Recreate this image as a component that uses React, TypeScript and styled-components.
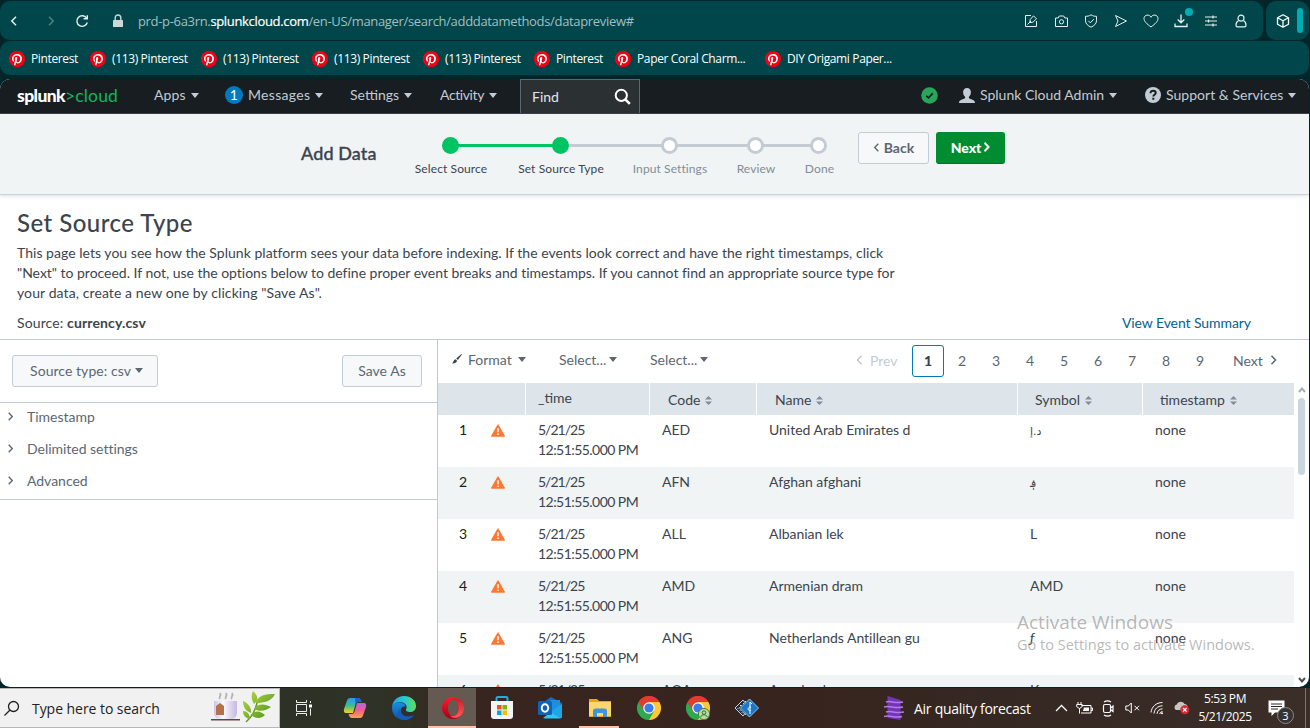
import React from "react";
import styled, { createGlobalStyle, css } from "styled-components";
import { FaPinterest } from "react-icons/fa";

const Global = createGlobalStyle`
  *, *::before, *::after { box-sizing: border-box; }
  html, body { margin: 0; padding: 0; overflow: hidden; }
  body { width: 1310px; height: 728px; font-family: Lato, "DejaVu Sans", sans-serif; font-size: 14px; color: #3c444d; }
`;

const Screen = styled.div`
  width: 1310px;
  height: 728px;
  display: flex;
  flex-direction: column;
  background: #00262a;
  overflow: hidden;
`;

/* ---------- browser chrome ---------- */
const AddressRow = styled.div`
  display: flex;
  gap: 3px;
  padding: 1px 1px 0 0;
  height: 40px;
`;
const AddressBar = styled.div`
  flex: 1;
  display: flex;
  align-items: center;
  height: 39px;
  background: #00464a;
  border-radius: 10px;
  padding: 0 7px 0 0;
  color: #e5f0f0;
`;
const SideBlock = styled.div`
  width: 43px;
  height: 39px;
  display: flex;
  align-items: center;
  gap: 7px;
  padding-left: 10px;
  background: #00464a;
  border-radius: 10px;
  color: #fff;
`;
const SideMark = styled.div`
  width: 6px;
  height: 25px;
  border-radius: 3px;
  background: #00adb5;
`;
const ChromeCell = styled.div<{ $w: number; $dim?: boolean; $ml?: number }>`
  position: relative;
  width: ${p => p.$w}px;
  margin-left: ${p => p.$ml ?? 0}px;
  display: flex;
  justify-content: center;
  align-items: center;
  opacity: ${p => (p.$dim ? 0.35 : 1)};
`;
const Dot = styled.i`
  position: absolute;
  top: -5px;
  right: 3px;
  width: 8px;
  height: 8px;
  border-radius: 50%;
  background: #00adb5;
`;
const Url = styled.div`
  flex: 1;
  padding-left: 9px;
  font: 13px/20px "Open Sans", sans-serif;
  letter-spacing: -0.33px;
  color: #a3bfc1;
  white-space: nowrap;
  b { font-weight: 400; color: #fff; -webkit-text-stroke: 0.2px #fff; }
`;
const Bookmarks = styled.div`
  height: 34px;
  margin: 1px 1px 4px 0;
  padding: 2px 0 0 9px;
  display: flex;
  align-items: center;
  background: #00464a;
  border-radius: 10px;
`;
const Bookmark = styled.div<{ $w: number }>`
  width: ${p => p.$w}px;
  display: flex;
  align-items: center;
  gap: 6px;
  font: 12px/18px "Open Sans", sans-serif;
  letter-spacing: -0.36px;
  color: #fff;
  white-space: nowrap;
`;
const PinBadge = styled.span`
  width: 16px;
  height: 16px;
  border-radius: 50%;
  background: radial-gradient(circle, #fff 60%, #f00014 62%);
  display: flex;
  svg { width: 16px; height: 16px; color: #f00014; }
`;

/* ---------- page ---------- */
const Page = styled.div`
  width: 1309px;
  height: 608px;
  border-radius: 10px;
  overflow: hidden;
  background: #fff;
  display: flex;
  flex-direction: column;
`;
const Nav = styled.div`
  height: 35px;
  flex: none;
  display: flex;
  align-items: center;
  background: #171d21;
  border-bottom: 1px solid #3c444d;
  color: #c3cbd4;
  line-height: 20px;
  padding-left: 17px;
`;
const Logo = styled.div`
  width: 137px;
  font: 900 17.5px/20px Lato, sans-serif;
  letter-spacing: -0.6px;
  color: #fff;
  white-space: nowrap;
  span { color: #12b55b; font-weight: 400; letter-spacing: 0.15px; }
`;
const NavItem = styled.div<{ $w: number; $ls?: number }>`
  width: ${p => p.$w}px;
  display: flex;
  align-items: center;
  gap: 5px;
  padding-bottom: 2px;
  letter-spacing: ${p => p.$ls ?? 0}px;
  white-space: nowrap;
`;
const Count = styled.span`
  width: 18px;
  height: 18px;
  border-radius: 50%;
  background: #007abd;
  color: #fff;
  text-align: center;
  line-height: 18px;
`;
const Caret = styled.i<{ $c?: string }>`
  border: 4px solid transparent;
  border-top: 5px solid ${p => p.$c || "currentColor"};
  border-bottom: 0;
`;
const Find = styled.div`
  width: 120px;
  height: 34px;
  align-self: flex-end;
  display: flex;
  align-items: center;
  justify-content: space-between;
  padding: 0 8px 0 11px;
  background: #2b3033;
  border: 1px solid #5c6773;
  border-bottom: 0;
  color: #e1e6eb;
  margin-right: 281px;
`;
const Header = styled.div`
  height: 81px;
  flex: none;
  display: flex;
  background: #f0f4f5;
  border-bottom: 1px solid #c8d3df;
  box-shadow: 0 1px 4px rgba(0, 0, 0, 0.14);
`;
const HeaderTitle = styled.div`
  width: 395px;
  padding: 27px 0 0 301px;
  font-size: 18px;
  line-height: 24px;
  font-weight: 500;
  letter-spacing: 0.1px;
  white-space: nowrap;
  -webkit-text-stroke: 0.35px #3c444d;
`;
const Step = styled.div<{ $w: number; $done?: boolean; $l?: string; $r?: string }>`
  position: relative;
  width: ${p => p.$w}px;
  padding-top: 23px;
  display: flex;
  flex-direction: column;
  align-items: center;
  font-size: 12px;
  line-height: 16px;
  letter-spacing: 0.1px;
  white-space: nowrap;
  color: ${p => (p.$done ? "#3c444d" : "#818d99")};
  &::before, &::after {
    content: "";
    position: absolute;
    top: 30px;
    height: 3px;
    width: 50%;
  }
  &::before { left: 0; background: ${p => p.$l || "transparent"}; }
  &::after { left: 50%; background: ${p => p.$r || "transparent"}; }
`;
const StepLabel = styled.span`padding-left: 2px;`;
const Bullet = styled.span<{ $done?: boolean }>`
  position: relative;
  z-index: 1;
  width: 17px;
  height: 17px;
  margin-bottom: 7px;
  border-radius: 50%;
  border: 3px solid ${p => (p.$done ? "#00c364" : "#c3cbd4")};
  background: ${p => (p.$done ? "#00c364" : "#fff")};
`;
const Button = styled.div<{ $w: number; $primary?: boolean; $strong?: boolean; $pl?: number }>`
  width: ${p => p.$w}px;
  height: 32px;
  flex: none;
  display: flex;
  align-items: center;
  justify-content: center;
  gap: 4px;
  padding: 0 0 2px ${p => p.$pl ?? 0}px;
  border-radius: 3px;
  background: #f7f8fa;
  border: 1px solid #c3cbd4;
  color: #5c6773;
  letter-spacing: 0.05px;
  white-space: nowrap;
  ${p => p.$strong && css`font-weight: 700; letter-spacing: 0;`}
  ${p => p.$primary && css`background: #008c30; border-color: #008c30 #008c30 #00742a; color: #fff; font-weight: 900; gap: 2px; letter-spacing: -0.1px;`}
`;
const HeaderButtons = styled.div`
  display: flex;
  gap: 7px;
  padding: 18px 0 0 8px;
`;
const Intro = styled.div`
  height: 145px;
  flex: none;
  padding: 14px 17px 0;
  border-bottom: 1px solid #bccbd6;
  line-height: 20px;
`;
const Title = styled.h1`
  margin: 0 0 7px;
  font-size: 24px;
  line-height: 27px;
  font-weight: 500;
  letter-spacing: 0.47px;
`;
const Line = styled.div<{ $ls?: number }>`
  letter-spacing: ${p => p.$ls ?? 0.1}px;
  white-space: nowrap;
`;
const SourceRow = styled.div`
  display: flex;
  justify-content: space-between;
  margin-top: 10px;
  padding-right: 41px;
  letter-spacing: 0.12px;
`;
const Link = styled.a`color: #006297; letter-spacing: -0.08px;`;

const Body = styled.div`
  flex: 1;
  display: flex;
  min-height: 0;
`;
const Side = styled.div`
  width: 438px;
  flex: none;
  border-right: 1px solid #bccbd6;
  color: #5c6773;
`;
const SideTop = styled.div`
  height: 63px;
  display: flex;
  justify-content: space-between;
  padding: 15px 15px 0 12px;
  border-bottom: 1px solid #bccbd6;
`;
const SideList = styled.div`
  height: 97px;
  border-bottom: 1px solid #bccbd6;
`;
const SideItem = styled.div`
  height: 32px;
  display: flex;
  align-items: center;
  gap: 13px;
  padding: 0 0 5px 7px;
  letter-spacing: -0.02px;
`;
const Results = styled.div`
  flex: 1;
  display: flex;
  flex-direction: column;
`;
const Tools = styled.div`
  height: 43px;
  flex: none;
  display: flex;
  align-items: center;
  padding: 0 0 2px 14px;
  color: #5c6773;
`;
const Tool = styled.div<{ $w: number; $gap?: number }>`
  width: ${p => p.$w}px;
  display: flex;
  align-items: center;
  gap: ${p => p.$gap ?? 3}px;
  padding-bottom: 3px;
  letter-spacing: 0;
`;
const PageNav = styled.div<{ $w: number; $off?: boolean; $ml?: number }>`
  width: ${p => p.$w}px;
  margin-left: ${p => p.$ml ?? 0}px;
  padding-bottom: 1px;
  display: flex;
  align-items: center;
  gap: 7px;
  color: ${p => (p.$off ? "#c3cbd4" : "#5c6773")};
`;
const PageNo = styled.div<{ $on?: boolean }>`
  width: 32px;
  height: 32px;
  margin-right: 2px;
  border-radius: 3px;
  line-height: 29px;
  text-align: center;
  border: 1px solid ${p => (p.$on ? "#007abd" : "transparent")};
  color: ${p => (p.$on ? "#3c444d" : "#5c6773")};
  font-weight: ${p => (p.$on ? 900 : 400)};
`;
const Grid = styled.div`
  flex: 1;
  display: flex;
  min-height: 0;
`;
const Table = styled.div`
  width: 856px;
  overflow: hidden;
`;
const Row = styled.div<{ $alt?: boolean }>`
  display: grid;
  grid-template-columns: 88px 124px 107px 261px 125px 151px;
  height: 52px;
  line-height: 20px;
  background: ${p => (p.$alt ? "#f0f4f5" : "#fff")};
`;
const HeadRow = styled(Row)`
  height: 32px;
  background: #dde4ea;
`;
const HeadCell = styled.div<{ $pad: number; $up?: boolean; $last?: boolean }>`
  border-right: ${p => (p.$last ? 0 : 1)}px solid #fff;
  display: flex;
  align-items: center;
  gap: 5px;
  padding: ${p => (p.$up ? "0 0 2px" : "2px 0 0")} ${p => p.$pad}px;
  white-space: nowrap;
  letter-spacing: 0;
`;
const Cell = styled.div`
  padding: 5px 0 0 12px;
  white-space: nowrap;
  letter-spacing: -0.02px;
`;
const TimeCell = styled(Cell)`
  letter-spacing: -0.55px;
`;
const Day = styled.div`letter-spacing: -1px;`;
const NumCell = styled(Cell)`
  display: flex;
  align-items: flex-start;
  gap: 24px;
  padding-left: 21px;
  color: #171d21;
  svg { margin-top: 4px; }
`;
const Arabic = styled.bdi`font: 11px/20px "DejaVu Sans", sans-serif;`;
const Scroll = styled.div`
  width: 15px;
  display: flex;
  flex-direction: column;
  align-items: center;
  justify-content: space-between;
  padding: 4px 0 4px;
`;
const ScrollTop = styled.div`
  display: flex;
  flex-direction: column;
  align-items: center;
  gap: 5px;
`;
const Thumb = styled.div`
  width: 7px;
  height: 77px;
  border-radius: 4px;
  background: #c9d6df;
`;
const Watermark = styled.div`
  position: absolute;
  left: 1017px;
  top: 609px;
  font: 14.5px/20px "Open Sans", sans-serif;
  letter-spacing: 0;
  color: rgba(140, 140, 140, 0.62);
  white-space: nowrap;
  pointer-events: none;
`;
const WatermarkTitle = styled.div`
  font-size: 19px;
  line-height: 26px;
`;

/* ---------- taskbar ---------- */
const Taskbar = styled.div`
  height: 40px;
  margin-top: 1px;
  display: flex;
  background: linear-gradient(90deg, #2c3227 0, #2f3226 380px, #38251f 480px, #38241f 800px, #352822 1000px, #3b2d27 1310px);
  color: #fff;
  font-family: "Open Sans", sans-serif;
`;
const SearchBox = styled.div`
  width: 280px;
  display: flex;
  align-items: center;
  background: #f1f1f1;
  border: solid #b7b7b7;
  border-width: 1px 1px 1px 0;
  color: #222;
  padding: 0 4px 0 3px;
  gap: 12px;
  letter-spacing: -0.05px;
  span { flex: 1; }
`;
const Task = styled.div<{ $active?: boolean; $open?: boolean; $first?: boolean }>`
  width: ${p => (p.$first ? 48 : 49)}px;
  margin-right: ${p => (p.$first ? 2 : 0)}px;
  display: flex;
  justify-content: center;
  align-items: center;
  background: ${p => (p.$active ? "linear-gradient(#645a52, #645a52) 0 0 / 48px 100% no-repeat" : "none")};
  position: relative;
  &::after {
    content: "";
    position: absolute;
    bottom: 0;
    left: ${p => (p.$active ? 0 : 4)}px;
    right: ${p => (p.$active ? 1 : 5)}px;
    height: 2px;
    background: ${p => (p.$active || p.$open ? "#ffc0a6" : "transparent")};
  }
`;
const Weather = styled.div`
  margin-left: 113px;
  width: 165px;
  display: flex;
  align-items: center;
  gap: 10px;
  white-space: nowrap;
  letter-spacing: -0.28px;
`;
const Tray = styled.div<{ $w: number }>`
  width: ${p => p.$w}px;
  display: flex;
  align-items: center;
  justify-content: center;
  position: relative;
`;
const Clock = styled.div`
  width: 62px;
  margin-left: 3px;
  text-align: center;
  padding-top: 2px;
  font-size: 12px;
  line-height: 18px;
  letter-spacing: -0.4px;
`;
const NoteCount = styled.span`
  position: absolute;
  left: 21px;
  top: 19px;
  width: 17px;
  height: 17px;
  border-radius: 50%;
  border: 1px solid #8d8984;
  background: #343434;
  font-size: 11px;
  line-height: 15px;
  text-align: center;
`;
const ShowDesktop = styled.div`
  margin-left: auto;
  width: 5px;
  border-left: 1px solid #7b726d;
`;

type IconProps = { w?: number; h?: number; box?: string; sw?: number; children: React.ReactNode };
const Svg = styled.svg`flex-shrink: 0;`;
const Icon = ({ w = 16, h, box, sw = 1, children }: IconProps) => (
  <Svg width={w} height={h ?? w} viewBox={box ?? `0 0 ${w} ${h ?? w}`} fill="none" stroke="currentColor" strokeWidth={sw}>
    {children}
  </Svg>
);
const Chevron = ({ left, size = 10, sw = 1.5 }: { left?: boolean; size?: number; sw?: number }) => (
  <Icon w={7} h={size} box="0 0 7 10" sw={sw}><path d={left ? "M5.5 .8L1.500 5l4 4.200" : "M1.500 .8L5.500 5l-4 4.200"} /></Icon>
);
const Sort = () => (
  <Icon w={7} h={9}><path d="M3.500 0L7 3.500H0zM0 5.500h7L3.500 9z" fill="#818d99" stroke="none" /></Icon>
);
const Warn = () => (
  <Icon w={14} h={13}>
    <path d="M7 1L13.300 12H.700z" fill="#ff7733" stroke="#ff7733" strokeWidth="1.300" strokeLinejoin="round" />
    <path d="M7 4.200v4M7 9.400v1.600" stroke="#fff" strokeWidth="1.500" />
  </Icon>
);

const bookmarks: [string, number][] = [
  ["Pinterest", 81], ["(113) Pinterest", 111], ["(113) Pinterest", 111], ["(113) Pinterest", 111],
  ["(113) Pinterest", 111], ["Pinterest", 81], ["Paper Coral Charm...", 150], ["DIY Origami Paper...", 150],
];

const rows: [string, string, React.ReactNode][] = [
  ["AED", "United Arab Emirates d", <Arabic dir="rtl">د.إ</Arabic>],
  ["AFN", "Afghan afghani", <Arabic dir="rtl">؋</Arabic>],
  ["ALL", "Albanian lek", "L"],
  ["AMD", "Armenian dram", "AMD"],
  ["ANG", "Netherlands Antillean gu", <i>ƒ</i>],
  ["AOA", "Angolan kwanza", "Kz"],
];

const ChromeLogo = ({ user }: { user?: boolean }) => (
  <Icon w={24}>
    <g stroke="none">
      <path d="M12 12L1.600 6A12 12 0 0 1 22.400 6z" fill="#e33b2e" />
      <path d="M12 12L22.400 6A12 12 0 0 1 12 24z" fill="#fcc934" />
      <path d="M12 12v12A12 12 0 0 1 1.600 6z" fill="#2da94f" />
      <path d="M12 6h10.400L17.200 15 12 24z" fill="#fcc934" />
      <path d="M1.600 6L6.800 15 12 24l5.200-9H9z" fill="#2da94f" />
      <path d="M1.600 6A12 12 0 0 1 22.400 6H12l-5.200 9z" fill="#e33b2e" />
      <circle cx="12" cy="12" r="5.800" fill="#fff" />
      <circle cx="12" cy="12" r="4.600" fill="#3b7ded" />
    </g>
    {user && (
      <g>
        <circle cx="18" cy="18" r="5.600" fill="#b5dda0" stroke="#4e7b42" />
        <circle cx="18" cy="16.600" r="1.800" stroke="#3e6d35" />
        <path d="M14.800 21c.6-3 5.800-3 6.400 0" stroke="#3e6d35" />
      </g>
    )}
  </Icon>
);

const Chrome = () => (
  <>
    <AddressRow>
      <AddressBar>
        <ChromeCell $w={28}><Icon w={8} h={10} sw={1.500}><path d="M6 .7L1.800 5 6 9.300" /></Icon></ChromeCell>
        <ChromeCell $w={46} $dim><Icon w={8} h={10} sw={1.500}><path d="M2 .7L6.200 5 2 9.300" /></Icon></ChromeCell>
        <ChromeCell $w={16}>
          <Icon w={14} sw={1.400}><path d="M11.600 4.100A5.300 5.300 0 1 0 12.300 8.500" /><path d="M12.300 1.200v3.600H8.600" /></Icon>
        </ChromeCell>
        <ChromeCell $w={22} $ml={17}>
          <Icon w={12} h={14}><rect x="1" y="6" width="10" height="7" rx=".5" fill="#d0d6d6" stroke="none" /><path d="M3.200 6V3.800a2.800 2.800 0 0 1 5.600 0V6" stroke="#d0d6d6" strokeWidth="1.400" /></Icon>
        </ChromeCell>
        <Url>prd-p-6a3rn.<b>splunkcloud.com</b>/en-US/manager/search/adddatamethods/datapreview#</Url>
        <ChromeCell $w={30}><Icon w={14}><path d="M7 1.500H1.500v11h11V7" /><path d="M3.500 10.500L7 7M9.500 1.800l3 3-3.600 3.400-3.200.4.6-3.200z" /></Icon></ChromeCell>
        <ChromeCell $w={30}><Icon w={15} h={14}><path d="M1.500 4h2.600l1.200-2h4.400l1.200 2h2.600v8.500h-12z" strokeLinejoin="round" /><circle cx="7.500" cy="7.800" r="2.100" /></Icon></ChromeCell>
        <ChromeCell $w={30}><Icon w={14}><path d="M7 .8c2 1.300 3.600 1.500 5.500 1.500v4.500c0 3-2.500 5-5.500 6.400C4 11.800 1.500 9.800 1.500 6.800V2.300C3.400 2.300 5 2.100 7 .8z" /><path d="M4.300 6.800l2 2 3.500-3.600" /></Icon></ChromeCell>
        <ChromeCell $w={30}><Icon w={14}><path d="M1.500 1.500l11 5.500-11 5.500L4 7z" strokeLinejoin="round" /></Icon></ChromeCell>
        <ChromeCell $w={30}><Icon w={16} h={14}><path d="M8 13C4 10 1 7.500 1 4.500 1 .6 6.500-.2 8 3.300 9.500-.2 15 .6 15 4.500 15 7.500 12 10 8 13z" /></Icon></ChromeCell>
        <ChromeCell $w={30}><Icon w={14} h={15} sw={1.300}><path d="M7 1.500v8M3.700 6.500L7 9.800l3.300-3.300M1 10.500v3h12v-3" /></Icon><Dot /></ChromeCell>
        <ChromeCell $w={30}><Icon w={14} h={12} sw={1.200}><path d="M1 2h12M1 6h12M1 10h12M9 .5v3M4.500 4.500v3M9 8.500v3" /></Icon></ChromeCell>
        <ChromeCell $w={30}><Icon w={12} h={14} sw={1.200}><circle cx="6" cy="4.200" r="3" /><path d="M3.600 6.500C1.500 7.600 1 9.200 1 11.200c0 1 .6 1.600 1.500 1.600h7c.9 0 1.500-.6 1.500-1.600 0-2-.5-3.600-2.600-4.700" /></Icon></ChromeCell>
      </AddressBar>
      <SideBlock>
        <Icon w={14} h={14} sw={1.300}><path d="M7 .8l5.500 3v6.400L7 13.200l-5.500-3V3.800zM1.500 3.800L7 6.700l5.500-2.900M7 6.700v6.500" strokeLinejoin="round" /></Icon>
        <SideMark />
      </SideBlock>
    </AddressRow>
    <Bookmarks>
      {bookmarks.map(([label, w], i) => (
        <Bookmark key={i} $w={w}><PinBadge><FaPinterest /></PinBadge>{label}</Bookmark>
      ))}
    </Bookmarks>
  </>
);

const TopNav = () => (
  <Nav>
    <Logo>splunk<span>&gt;cloud</span></Logo>
    <NavItem $w={71} $ls={0.1}>Apps <Caret /></NavItem>
    <NavItem $w={125} $ls={0.3}><Count>1</Count>Messages <Caret /></NavItem>
    <NavItem $w={90}>Settings <Caret /></NavItem>
    <NavItem $w={80} $ls={-0.4}>Activity <Caret /></NavItem>
    <Find>Find<Icon w={17} h={17} sw={2}><circle cx="7.300" cy="7.300" r="5.600" stroke="#fff" /><path d="M11.300 11.300l4.500 4.500" stroke="#fff" strokeWidth="2.600" /></Icon></Find>
    <NavItem $w={38}><Icon w={17}><circle cx="8.500" cy="8.500" r="8.300" fill="#28a558" stroke="none" /><path d="M5.300 8.700l2.200 2.200 4.200-4.500" stroke="#171d21" strokeWidth="1.600" /></Icon></NavItem>
    <NavItem $w={186}>
      <Icon w={16} h={15}><path d="M8 0c2.500 0 3.900 1.800 3.900 4.200 0 2-.9 3.800-2 4.600v1.500c1.400 1 6.100 1.100 6.100 4.700H0c0-3.600 4.700-3.700 6.100-4.700V8.800c-1.100-.8-2-2.600-2-4.600C4.100 1.800 5.500 0 8 0z" fill="#c3cbd4" stroke="none" /></Icon>
      Splunk Cloud Admin <Caret />
    </NavItem>
    <NavItem $w={155} $ls={0.03}>
      <Icon w={16}><circle cx="8" cy="8" r="8" fill="#c3cbd4" stroke="none" /><path d="M5.500 6.300c0-3.600 5.200-3.200 5.200-.3 0 1.800-2.400 1.800-2.400 3.600M8.300 10.800v2" stroke="#171d21" strokeWidth="2" /></Icon>
      Support &amp; Services <Caret />
    </NavItem>
  </Nav>
);

const GREEN = "#00c364";
const GREY = "#c3cbd4";

const Wizard = () => (
  <Header>
    <HeaderTitle>Add Data</HeaderTitle>
    <Step $w={110} $done $r={GREEN}><Bullet $done /><StepLabel>Select Source</StepLabel></Step>
    <Step $w={110} $done $l={GREEN} $r={GREY}><Bullet $done /><StepLabel>Set Source Type</StepLabel></Step>
    <Step $w={108} $l={GREY} $r={GREY}><Bullet /><StepLabel>Input Settings</StepLabel></Step>
    <Step $w={64} $l={GREY} $r={GREY}><Bullet /><StepLabel>Review</StepLabel></Step>
    <Step $w={63} $l={GREY}><Bullet /><StepLabel>Done</StepLabel></Step>
    <HeaderButtons>
      <Button $w={71} $strong><Chevron left size={9} />Back</Button>
      <Button $w={69} $primary>Next<Chevron size={10} sw={2} /></Button>
    </HeaderButtons>
  </Header>
);

const Preview = () => (
  <Results>
    <Tools>
      <Tool $w={107} $gap={6}>
        <Icon w={10} h={10}><path d="M9.500 0L10 .5 5.800 6 4.200 4.500zM3.500 5.200l1.600 1.600C4.500 9 2 9.800 0 9.500c1.500-1 1.300-3.500 3.500-4.300z" fill="#3c444d" stroke="none" /></Icon>
        Format <Caret />
      </Tool>
      <Tool $w={91}>Select... <Caret /></Tool>
      <Tool $w={206}>Select... <Caret /></Tool>
      <PageNav $w={56} $off><Chevron left />Prev</PageNav>
      {[1, 2, 3, 4, 5, 6, 7, 8, 9].map(n => <PageNo key={n} $on={n === 1}>{n}</PageNo>)}
      <PageNav $w={46} $ml={15}>Next<Chevron /></PageNav>
    </Tools>
    <Grid>
      <Table>
        <HeadRow>
          <HeadCell $pad={0} />
          <HeadCell $pad={12} $up>_time</HeadCell>
          <HeadCell $pad={18}>Code<Sort /></HeadCell>
          <HeadCell $pad={18}>Name<Sort /></HeadCell>
          <HeadCell $pad={17}>Symbol<Sort /></HeadCell>
          <HeadCell $pad={17} $last>timestamp<Sort /></HeadCell>
        </HeadRow>
        {rows.map(([code, name, sym], i) => (
          <Row key={code} $alt={i % 2 === 1}>
            <NumCell>{i + 1}<Warn /></NumCell>
            <TimeCell><Day>5/21/25</Day>12:51:55.000 PM</TimeCell>
            <Cell>{code}</Cell>
            <Cell>{name}</Cell>
            <Cell>{sym}</Cell>
            <Cell>none</Cell>
          </Row>
        ))}
      </Table>
      <Scroll>
        <ScrollTop>
          <Icon w={8} h={6} sw={2}><path d="M1 5l3-3.500L7 5" stroke="#a9aeb3" /></Icon>
          <Thumb />
        </ScrollTop>
        <Icon w={8} h={6} sw={2}><path d="M1 1l3 3.500L7 1" stroke="#4d4d4d" /></Icon>
      </Scroll>
    </Grid>
  </Results>
);

const WindowsTaskbar = () => (
  <Taskbar>
    <SearchBox>
      <Icon w={17} h={17} sw={1.300}><circle cx="10.500" cy="6.500" r="5" stroke="#222" /><path d="M7 10L1.500 15.500" stroke="#222" /></Icon>
      <span>Type here to search</span>
      <Icon w={64} h={34}>
        <defs>
          <linearGradient id="cup"><stop stopColor="#cfc4e6" /><stop offset=".4" stopColor="#fbf8ff" /><stop offset="1" stopColor="#c6b8df" /></linearGradient>
          <linearGradient id="leaf" x2="1" y2="1"><stop stopColor="#b9dc45" /><stop offset="1" stopColor="#4b8e1c" /></linearGradient>
        </defs>
        <path d="M9 8c-2-2 2-3 0-6M15 8c-2-2 2-3 0-6M21 8c-2-2 2-3 0-6" stroke="#b5b2b5" strokeWidth="1.800" />
        <path d="M3 10h23v11c0 5-3 7-6 7H9c-4 0-6-3-6-7z" fill="url(#cup)" stroke="none" />
        <path d="M5 15l4-3 4 3v9H5z" fill="#b4714a" stroke="none" />
        <path d="M0 28h29v1.500H0z" fill="#6e4043" stroke="none" />
        <path d="M35 31c7-6 9-12 12-22" stroke="#5f9a20" strokeWidth="1.500" />
        <g fill="url(#leaf)" stroke="none">
          <path d="M42 0c6 5 5 10 1 13-3-5-3-9-1-13zM45 12c2-8 9-9 19-9-3 7-11 9-19 9zM43 18c4-6 11-5 17-2-5 4-12 5-17 2zM40 24c4-5 9-4 14 0-4 4-9 4-14 0zM32 10c5 2 9 7 8 12-6-2-8-7-8-12zM32 20c4 0 7 3 7 8-5-1-7-4-7-8z" />
        </g>
      </Icon>
    </SearchBox>
    <Task $first>
      <Icon w={18} h={16}><path d="M1.500 0v2.500h10V0M1.500 16v-2.500h10V16M1.500 4.500h10v7h-10zM15.500 1v2M15.500 8.500v7" stroke="#eee" /><path d="M14 4.500h3v3h-3z" fill="#fff" stroke="none" /></Icon>
    </Task>
    <Task>
      <Icon w={24} h={22}>
        <defs>
          <linearGradient id="cpA" x2="0" y2="1"><stop stopColor="#209df2" /><stop offset=".5" stopColor="#3bbd8c" /><stop offset="1" stopColor="#f6d21c" /></linearGradient>
          <linearGradient id="cpB" x2="0" y2="1"><stop stopColor="#b760e8" /><stop offset=".5" stopColor="#f0608a" /><stop offset="1" stopColor="#ffa458" /></linearGradient>
        </defs>
        <path d="M7 1h8c2 0 3 2 3.500 4H15c-1.500 0-2 1-2.500 2.500L10 16H3c-2 0-2.500-2-2-4L4 3.500C4.500 2 5.500 1 7 1z" fill="url(#cpA)" stroke="none" />
        <path d="M17 21H9c-2 0-3-2-3.500-4H9c1.500 0 2-1 2.500-2.500L14 6h7c2 0 2.500 2 2 4l-3 8.500C19.500 20 18.500 21 17 21z" fill="url(#cpB)" stroke="none" />
        <path d="M12 1h3c2 0 3 2 3.500 4H15c-1.500 0-2 1-2.500 2.500z" fill="#1763d6" stroke="none" />
      </Icon>
    </Task>
    <Task>
      <Icon w={24}>
        <defs>
          <linearGradient id="edA"><stop stopColor="#1ca3e8" /><stop offset=".5" stopColor="#28c7d4" /><stop offset="1" stopColor="#62de55" /></linearGradient>
          <linearGradient id="edB" x2="0" y2="1"><stop stopColor="#1b8fe0" /><stop offset="1" stopColor="#0c4fa5" /></linearGradient>
        </defs>
        <g stroke="none">
          <path d="M0 12C0 5 5 0 12 0c7 0 12 4.500 12 10 0 4-3 6-6 6-3 0-4.500-1-4-2.500C16 10 13 6 8 6 4 6 0 9 0 12z" fill="url(#edA)" />
          <path d="M0 12c0-3 3-5.500 7-5.500 4 0 6.500 2 6.500 4C9 10 8 14 9.500 17c2 4 8 5 12.500 2-2 3-6 5-10 5C5 24 0 19 0 12z" fill="url(#edB)" />
          <path d="M8.500 12.500c-2 7 6 10 13.500 6.500-2 3-6 5-10 5-6 0-9-6-3.500-11.500z" fill="#165cb4" />
        </g>
      </Icon>
    </Task>
    <Task $active>
      <Icon w={24}>
        <defs>
          <linearGradient id="opA" x2="0" y2="1"><stop stopColor="#ff1b2d" /><stop offset="1" stopColor="#a70014" /></linearGradient>
          <linearGradient id="opB" x2="0" y2="1"><stop stopColor="#c4202b" /><stop offset="1" stopColor="#ff5a5a" /></linearGradient>
        </defs>
        <path fillRule="evenodd" d="M12 1a11 11 0 1 0 0 22 11 11 0 1 0 0-22zM12 4c3 0 5 3.500 5 8s-2 8-5 8-5-3.500-5-8 2-8 5-8z" fill="url(#opA)" stroke="none" />
        <path d="M9 4.500C12 0 23 2 23 12S12 24 9 19.500c5 2.500 8.500-2 8.500-7.500S14 2 9 4.500z" fill="url(#opB)" stroke="none" />
      </Icon>
    </Task>
    <Task>
      <Icon w={24}>
        <path d="M6.500 6V2.500C6.500 1.500 7 1 8 1h8c1 0 1.500.5 1.500 1.500V6" stroke="#29a9e0" strokeWidth="2" />
        <path d="M1 5h22v15a3 3 0 0 1-3 3H4a3 3 0 0 1-3-3z" fill="#f4f4f4" stroke="none" />
        <path d="M7 9h4.500v4.500H7z" fill="#f25022" stroke="none" /><path d="M12.500 9H17v4.500h-4.500z" fill="#7fba00" stroke="none" />
        <path d="M7 14.500h4.500V19H7z" fill="#00a4ef" stroke="none" /><path d="M12.500 14.500H17V19h-4.500z" fill="#ffb900" stroke="none" />
      </Icon>
    </Task>
    <Task>
      <Icon w={25} h={24}>
        <g stroke="none">
          <path d="M4 7l9-6 11 6v12H4z" fill="#1469ba" /><path d="M12 4h10v12H12z" fill="#1d8fe0" />
          <path d="M5 22l19-14v12a2.500 2.500 0 0 1-2.500 2.500H7z" fill="#36c4f3" /><path d="M24 8v12a2 2 0 0 1-2 2L12 16z" fill="#1ea5e6" />
          <rect x="0" y="5" width="14" height="14" rx="1.500" fill="#0f64b8" />
        </g>
        <ellipse cx="7" cy="12" rx="3.200" ry="3.700" stroke="#fff" strokeWidth="2" />
      </Icon>
    </Task>
    <Task $open>
      <Icon w={22} h={20}>
        <g stroke="none">
          <path d="M0 1h8l2 2h12v16H0z" fill="#e8a50c" /><path d="M0 4h22v14H0z" fill="#ffd768" />
          <path d="M4 19v-6a2.500 2.500 0 0 1 2.500-2.500h9A2.500 2.500 0 0 1 18 13v6h-4v-4H8v4z" fill="#3a96dd" />
        </g>
      </Icon>
    </Task>
    <Task><ChromeLogo /></Task>
    <Task><ChromeLogo user /></Task>
    <Task>
      <Icon w={24} h={20}>
        <path d="M8 2L0 10l8 8 6-8z" fill="#1b2a38" stroke="#c9d6e0" />
        <path d="M2.500 10l6 6M5 7l6 6M11 3L4 10l7 7" stroke="#dce6ec" strokeDasharray="1.500 1.500" />
        <path d="M14.500 1L23.500 10l-9 9-9-9z" fill="#1b78c8" stroke="#8cc4ec" />
        <path d="M15 4v12M15 4l2 2M16 9c-4 0-3.500 4-.5 3.500" stroke="#fff" />
      </Icon>
    </Task>
    <Weather>
      <Icon w={20} h={24}>
        <path d="M3.500 0l13 4v20L3.500 22z" fill="#7136b8" stroke="none" />
        <path d="M2 6c5-2 8 2 17 0M0 11c6-2 10 2 19 0M2 16c5-2 9 2 18 0M0 20.500c6-2 10 2 18 0" stroke="#b57be8" strokeWidth="1.600" />
      </Icon>
      Air quality forecast
    </Weather>
    <Tray $w={24}><Icon w={13} h={8} sw={1.300}><path d="M1 7l5.500-5.500L12 7" /></Icon></Tray>
    <Tray $w={22}><Icon w={17} h={13}><path d="M5.500 3.500h9.500v7.500H5M15 6h1.500v2.500H15M2 0v2.500M5 0v2.500M.7 2.500h5.500v2.200L3.500 6.500.7 4.700zM3.500 6.500v5" /><path d="M8 5.500h5V9H7z" fill="#fff" stroke="none" /></Icon></Tray>
    <Tray $w={26}><Icon w={12} h={17} sw={1.200}><rect x="1.500" y="4.500" width="7" height="8" rx="1.500" /><path d="M8.500 8l2.500-2v5.500l-2.500-2M2 2c2-1.300 5-1.300 7 0M2 15c2 1.300 5 1.300 7 0" /></Icon></Tray>
    <Tray $w={22}><Icon w={15} h={12}><path d="M.8 4h2.500l3-3v10l-3-3H.8zM9.500 3.800l4.500 4.500M14 3.800L9.500 8.300" /></Icon></Tray>
    <Tray $w={28}><Icon w={14} h={14}><path d="M1 11.500C1.500 6 6 1.500 12.500 1.500M4 12.500C4.500 8 7.500 5 12.500 4.800M7 12.800c.3-3 2.500-4.800 5.500-5M9.800 13c.2-1.500 1.200-2.300 2.700-2.500" /><circle cx="12" cy="12.300" r="1" fill="#fff" stroke="none" /></Icon></Tray>
    <Tray $w={20}><Icon w={17} h={14}><path d="M3 9a3 3 0 0 1 .8-5.500C5-.2 10-.2 11.500 3c3 0 4 3 2.500 6z" fill="#c9c5c2" stroke="none" /><circle cx="11.800" cy="8.800" r="4.500" fill="#d92832" stroke="none" /><path d="M10 7l3.600 3.600M13.600 7L10 10.600" stroke="#fff" strokeWidth="1.300" /></Icon></Tray>
    <Clock>5:53 PM<br />5/21/2025</Clock>
    <Tray $w={40}>
      <Icon w={17} h={17}><path d="M.5.5h16v12H7l-3.500 3.500v-3.500h-3z" fill="#fff" stroke="none" /><path d="M3 4h11M3 6.500h11M3 9h7" stroke="#352822" /></Icon>
      <NoteCount>3</NoteCount>
    </Tray>
    <ShowDesktop />
  </Taskbar>
);

export default function App() {
  return (
    <Screen>
      <Global />
      <Chrome />
      <Page>
        <TopNav />
        <Wizard />
        <Intro>
          <Title>Set Source Type</Title>
          <Line $ls={0.03}>This page lets you see how the Splunk platform sees your data before indexing. If the events look correct and have the right timestamps, click</Line>
          <Line $ls={-0.02}>"Next" to proceed. If not, use the options below to define proper event breaks and timestamps. If you cannot find an appropriate source type for</Line>
          <Line>your data, create a new one by clicking "Save As".</Line>
          <SourceRow><span>Source: <b>currency.csv</b></span><Link>View Event Summary</Link></SourceRow>
        </Intro>
        <Body>
          <Side>
            <SideTop>
              <Button $w={146} $pl={3}>Source type: csv<Caret /></Button>
              <Button $w={80}>Save As</Button>
            </SideTop>
            <SideList>
              {["Timestamp", "Delimited settings", "Advanced"].map(s => (
                <SideItem key={s}><Chevron size={9} />{s}</SideItem>
              ))}
            </SideList>
          </Side>
          <Preview />
        </Body>
      </Page>
      <Watermark>
        <WatermarkTitle>Activate Windows</WatermarkTitle>
        Go to Settings to activate Windows.
      </Watermark>
      <WindowsTaskbar />
    </Screen>
  );
}
